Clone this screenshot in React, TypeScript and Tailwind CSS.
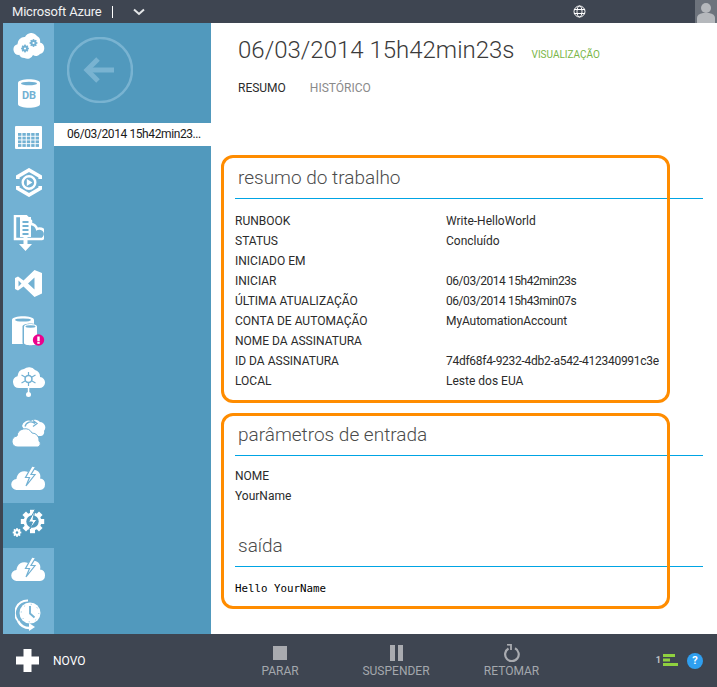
const SB = "#72b1d3"

function Gear({ cx, cy, r, color }: { cx: number; cy: number; r: number; color: string }) {
  const teeth = [0, 45, 90, 135].map((a) => (
    <rect key={a} x={cx - r * 0.28} y={cy - r * 1.3} width={r * 0.56} height={r * 2.6} fill={color} transform={`rotate(${a} ${cx} ${cy})`} />
  ))
  return (
    <g>
      {teeth}
      <circle cx={cx} cy={cy} r={r} fill={color} />
    </g>
  )
}

function IconCloudGears() {
  return (
    <svg width="32" height="27" viewBox="0 0 32 27">
      <path d="M6 22a5.500 5.500 0 0 1-1.500-10.800A7 7 0 0 1 12 4 7 7 0 0 1 24 3a6 6 0 0 1 3 6.500 6 6 0 0 1 0 11.500 5 5 0 0 1-7 1 6 6 0 0 1-8.500 3 6 6 0 0 1-5.500-3.500Z" fill="white" />
      <Gear cx={12} cy={15.500} r={3} color={SB} />
      <circle cx={12} cy={15.500} r={1.100} fill="white" />
      <Gear cx={20.500} cy={10} r={3} color={SB} />
      <circle cx={20.500} cy={10} r={1.100} fill="white" />
    </svg>
  )
}

function IconDb() {
  return (
    <svg width="22" height="29" viewBox="0 0 22 29">
      <path d="M0 4c0-5 22-5 22 0v21c0 5-22 5-22 0Z" fill="white" />
      <ellipse cx="11" cy="4.500" rx="8" ry="1.800" fill={SB} />
      <text x="11" y="20" textAnchor="middle" fontSize="11" fontWeight="700" fill={SB} fontFamily="Roboto, sans-serif">DB</text>
    </svg>
  )
}

function IconGrid() {
  const cells = []
  for (let r = 0; r < 4; r++) {
    for (let c = 0; c < 5; c++) {
      cells.push(<rect key={`${r}-${c}`} x={3 + c * 4.4} y={7 + r * 3.7} width="3.400" height="2.800" fill={SB} />)
    }
  }
  return (
    <svg width="27" height="23" viewBox="0 0 27 23">
      <rect width="27" height="23" rx="1" fill="white" />
      {cells}
    </svg>
  )
}

function IconHex() {
  return (
    <svg width="26" height="29" viewBox="0 0 26 29">
      <path d="M1.800 11V8.500L13 2 24.200 8.500V11M1.800 18V20.500L13 27 24.200 20.500V18" fill="none" stroke="white" strokeWidth="3.600" />
      <circle cx="13" cy="14.500" r="6.300" fill="none" stroke="white" strokeWidth="2.400" />
      <path d="M10.800 11v7l5.600-3.500Z" fill="white" />
    </svg>
  )
}

function IconDeploy() {
  return (
    <svg width="31" height="36" viewBox="0 0 31 36">
      <path d="M2 1H13L18 6V9A7 7 0 0 1 24 14 5.500 5.500 0 0 1 29 24H2Z" fill="none" stroke="white" strokeWidth="2.500" />
      <rect x="7" y="2" width="11" height="20" fill="white" />
      <path d="M9.500 7H15.500M9.500 11H15.500M9.500 15H15.500M9.500 19H15.500" stroke={SB} strokeWidth="1.800" />
      <path d="M10.500 20H14.500V29H19L12.500 36 6 29H10.500Z" fill="white" />
    </svg>
  )
}

function IconVs() {
  return (
    <svg width="27" height="27" viewBox="0 0 27 27">
      <path d="M19.500 0 27 3V23.500L19.500 27 8.500 16.500 3 20.500 0 19V8L3 6.500 8.500 10.500ZM19.500 7.500 13 13.500 19.500 19.500ZM3.500 10.500V16.500L6.500 13.500Z" fill="white" fillRule="evenodd" />
    </svg>
  )
}

function IconStorageAlert() {
  return (
    <svg width="33" height="32" viewBox="0 0 33 32">
      <path d="M0 4c0-5 22-5 22 0v6H12V28H0Z" fill="white" />
      <ellipse cx="11" cy="4" rx="8" ry="1.600" fill={SB} />
      <path d="M10.500 10.500c0-4 16-4 16 0V27c0 4-16 4-16 0Z" fill={SB} />
      <path d="M12 10.500c0-3.500 13-3.500 13 0V27c0 3-13 3-13 0Z" fill="white" />
      <ellipse cx="18.500" cy="10.500" rx="5" ry="1.200" fill={SB} />
      <circle cx="26.500" cy="24" r="5.700" fill="#ec008c" />
      <rect x="25.300" y="20.500" width="2.400" height="4.800" fill="white" />
      <rect x="25.300" y="26" width="2.400" height="1.800" fill="white" />
    </svg>
  )
}

function IconHub() {
  return (
    <svg width="33" height="32" viewBox="0 0 33 32">
      <path d="M7 22a6 6 0 0 1-1.500-11.800A8 8 0 0 1 12 3a8 8 0 0 1 11 1 7 7 0 0 1 5 7 5.500 5.500 0 0 1-1 11Z" fill="white" />
      <path d="M16.500 6V20M9.500 9 23.500 17M23.500 9 9.500 17" stroke={SB} strokeWidth="1.200" />
      <circle cx="16.500" cy="13" r="4.200" fill={SB} />
      <circle cx="16.500" cy="13" r="2.700" fill="white" />
      <rect x="15.800" y="22" width="1.500" height="6" fill="white" />
      <circle cx="16.500" cy="28.500" r="2.500" fill="white" />
    </svg>
  )
}

function IconClouds() {
  return (
    <svg width="34" height="30" viewBox="0 0 34 30">
      <path d="M10 9a7 7 0 0 1 9-5 7 7 0 0 1 9 1 5.500 5.500 0 0 1 4 9 4 4 0 0 1-3 5H16Z" fill="white" />
      <path d="M13 9.500A6 6 0 0 1 23 6.500M21 3.500 25 6.500 21 9.500" fill="none" stroke={SB} strokeWidth="1.300" />
      <path d="M6 30a5.500 5.500 0 0 1-1-11 8 8 0 0 1 15-3 7 7 0 0 1 7 8 3.500 3.500 0 0 1-1 6Z" fill="white" stroke={SB} strokeWidth="1" />
    </svg>
  )
}

function IconCloudBolt() {
  return (
    <svg width="35" height="24" viewBox="0 0 35 24">
      <path d="M6 24a5.500 5.500 0 0 1-.5-11A8 8 0 0 1 17 6 7 7 0 0 1 29 12.500 5.800 5.800 0 0 1 29 24Z" fill="white" />
      <path d="M21 0 14.500 11.500H18.500L15 20 24 8.500H20L24.500 1Z" fill="white" stroke={SB} strokeWidth="1.200" />
    </svg>
  )
}

function IconGearBolt() {
  return (
    <svg width="33" height="29" viewBox="0 0 33 29">
      <Gear cx={20.500} cy={12.500} r={9} color="white" />
      <circle cx={20.500} cy={12.500} r={6.200} fill="#5199bd" />
      <path d="M23 1 16.500 13H20.500L17.500 20.500 25 10.500H21Z" fill="white" stroke="#5199bd" strokeWidth="1" />
      <Gear cx={5} cy={23.500} r={3.300} color="white" />
      <circle cx={5} cy={23.500} r={1.200} fill="#5199bd" />
    </svg>
  )
}

function IconClock() {
  return (
    <svg width="27" height="33" viewBox="0 0 27 33">
      <path d="M3 22A12.500 12.500 0 0 1 13 1.500" fill="none" stroke="white" strokeWidth="1.800" />
      <path d="M3 22A13 13 0 0 0 15 29" fill="none" stroke="white" strokeWidth="2.500" />
      <path d="M14 24v8l6-4Z" fill="white" />
      <circle cx="15" cy="14" r="10.500" fill="white" />
      <path d="M15 7v7.500l4.500 4" fill="none" stroke={SB} strokeWidth="1.800" />
      <circle cx="15" cy="14" r="8.800" fill="none" stroke={SB} strokeWidth=".8" strokeDasharray="1 6" />
    </svg>
  )
}

const navItems = [
  { cls: "h-[46px]", icon: <IconCloudGears /> },
  { cls: "h-[48px]", icon: <IconDb /> },
  { cls: "h-[40px]", icon: <IconGrid /> },
  { cls: "h-[50px]", icon: <IconHex /> },
  { cls: "h-[52px]", icon: <IconDeploy /> },
  { cls: "h-[48px]", icon: <IconVs /> },
  { cls: "h-[50px]", icon: <IconStorageAlert /> },
  { cls: "h-[50px]", icon: <IconHub /> },
  { cls: "h-[50px]", icon: <IconClouds /> },
  { cls: "h-[46px] pb-[4px]", icon: <IconCloudBolt /> },
  { cls: "h-[45px] pb-[5px] bg-[#5199bd]", icon: <IconGearBolt /> },
  { cls: "h-[42px]", icon: <IconCloudBolt /> },
  { cls: "h-[44px] pt-[6px]", icon: <IconClock /> },
]

const jobRows = [
  ["RUNBOOK", "Write-HelloWorld", ""],
  ["STATUS", "Concluído", ""],
  ["INICIADO EM", "", ""],
  ["INICIAR", "06/03/2014 15h42min23s", "tracking-[-0.45px]"],
  ["ÚLTIMA ATUALIZAÇÃO", "06/03/2014 15h43min07s", "tracking-[-0.45px]"],
  ["CONTA DE AUTOMAÇÃO", "MyAutomationAccount", "tracking-[-0.1px]"],
  ["NOME DA ASSINATURA", "", ""],
  ["ID DA ASSINATURA", "74df68f4-9232-4db2-a542-412340991c3e", "tracking-[-0.28px]"],
  ["LOCAL", "Leste dos EUA", ""],
]

function SectionTitle({ children }: { children: string }) {
  return (
    <div className="border-b border-[#00a4e4] mr-[14px] pb-[7px]">
      <h2 className="pl-[3px] text-[19px] leading-[26px] text-[#4b4b4b] font-light">{children}</h2>
    </div>
  )
}

export default function App() {
  return (
    <div className="w-[717px] h-[687px] flex flex-col overflow-hidden bg-[#3e4551] text-[12px] font-['Roboto','Open_Sans',sans-serif]">
      {/* top bar */}
      <header className="h-[23px] shrink-0 flex items-center text-white relative">
        <span className="ml-[12px] w-[100px] text-[13px] leading-none text-[#f0f1f2] tracking-[-0.2px]">Microsoft Azure</span>
        <span className="w-px h-[12px] bg-white" />
        <svg className="ml-[20px]" width="12" height="8" viewBox="0 0 12 8">
          <path d="M1 1.500 6 6 11 1.500" fill="none" stroke="#e4e6e8" strokeWidth="2" />
        </svg>
        <svg className="ml-[428px]" width="13" height="13" viewBox="0 0 13 13" fill="none" stroke="white" strokeWidth="1">
          <circle cx="6.500" cy="6.500" r="5.500" />
          <ellipse cx="6.500" cy="6.500" rx="2.500" ry="5.500" />
          <path d="M1 4.500H12M1 8.500H12" />
        </svg>
        <div className="ml-auto w-[22px] h-[23px] bg-[#6d737c] overflow-hidden">
          <svg width="22" height="23" viewBox="0 0 22 23">
            <circle cx="11" cy="8" r="5" fill="#b5b8bc" />
            <path d="M2 23V18Q2 14 8 13H14Q20 14 20 18V23Z" fill="#b5b8bc" />
          </svg>
        </div>
      </header>

      <div className="flex-1 min-h-0 flex">
        {/* nav */}
        <nav className="ml-[3px] w-[51px] shrink-0 bg-[#72b1d3] overflow-hidden">
          {navItems.map((item, i) => (
            <div key={i} className={`${item.cls} flex items-center justify-center`}>
              {item.icon}
            </div>
          ))}
        </nav>

        {/* second column */}
        <aside className="w-[157px] shrink-0 bg-[#5199bd]">
          <div className="h-[100px] pl-[13px] pt-[14px]">
            <svg width="66" height="66" viewBox="0 0 66 66" fill="none" stroke="#79b3d1">
              <circle cx="33" cy="33" r="32" strokeWidth="2.500" />
              <path d="M47 33H23" strokeWidth="5" />
              <path d="M31 22 20 33 31 44" strokeWidth="5" />
            </svg>
          </div>
          <div className="h-[23px] bg-white text-[#1a1a1a] pl-[13px] leading-[23px] whitespace-nowrap tracking-[-0.4px]">06/03/2014 15h42min23...</div>
        </aside>

        {/* main */}
        <main className="flex-1 bg-white relative pl-[27px] overflow-hidden text-[#2b2b2b]">
          <div className="pt-[9px] flex items-baseline h-[52px]">
            <h1 className="text-[24px] leading-[36px] font-light text-[#3a3a3a] whitespace-nowrap">06/03/2014 15h42min23s</h1>
            <span className="ml-[17px] text-[10px] text-[#7ab648]">VISUALIZAÇÃO</span>
          </div>
          <div className="flex gap-[24px] h-[20px] pt-[3px] leading-[20px]">
            <span>RESUMO</span>
            <span className="text-[#8a8a8a]">HISTÓRICO</span>
          </div>

          <section className="mt-[70px] -ml-[3px]">
            <SectionTitle>resumo do trabalho</SectionTitle>
            <dl className="mt-[12px]">
              {jobRows.map(([k, v, tr]) => (
                <div key={k} className="flex h-[20px] leading-[20px]">
                  <dt className="w-[211px]">{k}</dt>
                  <dd className={tr}>{v}</dd>
                </div>
              ))}
            </dl>
          </section>

          <section className="mt-[31px] -ml-[3px]">
            <SectionTitle>parâmetros de entrada</SectionTitle>
            <p className="mt-[10px] leading-[20px]">NOME</p>
            <p className="leading-[20px]">YourName</p>
          </section>

          <section className="mt-[27px] -ml-[3px]">
            <SectionTitle>saída</SectionTitle>
            <pre className="mt-[12px] text-[10.800px] leading-[20px] font-['DejaVu_Sans_Mono',monospace] text-black">Hello YourName</pre>
          </section>

          {/* orange callouts */}
          <div className="absolute left-[10px] top-[132px] w-[449px] h-[248px] border-[3px] border-[#ff8c00] rounded-[12px]" />
          <div className="absolute left-[10px] top-[390px] w-[449px] h-[196px] border-[3px] border-[#ff8c00] rounded-[12px]" />
        </main>
      </div>

      {/* command bar */}
      <footer className="h-[53px] shrink-0 flex items-center text-[#a4a8ad]">
        <svg className="ml-[16px]" width="23" height="23" viewBox="0 0 23 23">
          <path d="M7.500 0H15.500V7.500H23V15.500H15.500V23H7.500V15.500H0V7.500H7.500Z" fill="white" />
        </svg>
        <span className="ml-[14px] text-white w-[169px]">NOVO</span>
        <div className="w-[116px] flex flex-col items-center">
          <div className="h-[21px] flex items-center"><div className="w-[14px] h-[14px] bg-[#a9abb0]" /></div>
          <span className="leading-[16px]">PARAR</span>
        </div>
        <div className="w-[116px] flex flex-col items-center">
          <div className="h-[21px] flex items-center gap-[3px]">
            <div className="w-[5px] h-[16px] bg-[#a9abb0]" />
            <div className="w-[5px] h-[16px] bg-[#a9abb0]" />
          </div>
          <span className="leading-[16px]">SUSPENDER</span>
        </div>
        <div className="w-[115px] flex flex-col items-center">
          <div className="h-[21px] flex items-center">
            <svg width="16" height="18" viewBox="0 0 16 18" fill="none" stroke="#a9abb0" strokeWidth="2.200">
              <path d="M4.500 4.500A6.800 6.800 0 1 0 11 4.300" />
              <path d="M3 .5 7 0.800 7 6" strokeWidth="1.800" />
            </svg>
          </div>
          <span className="leading-[16px]">RETOMAR</span>
        </div>
        <span className="ml-auto text-[9px] font-bold text-[#c0c3c7]">1</span>
        <svg className="ml-[2px] mt-[-2px]" width="15" height="12" viewBox="0 0 15 12" fill="#8fd13f">
          <rect x="0" y="0" width="12" height="3" />
          <rect x="0" y="4.500" width="7" height="3" />
          <rect x="0" y="9" width="15" height="3" />
        </svg>
        <span className="ml-[9px] mr-[14px] w-[16px] h-[16px] rounded-full bg-[#2f9ff0] text-white text-[11px] font-bold leading-[16px] text-center">?</span>
      </footer>
    </div>
  )
}
